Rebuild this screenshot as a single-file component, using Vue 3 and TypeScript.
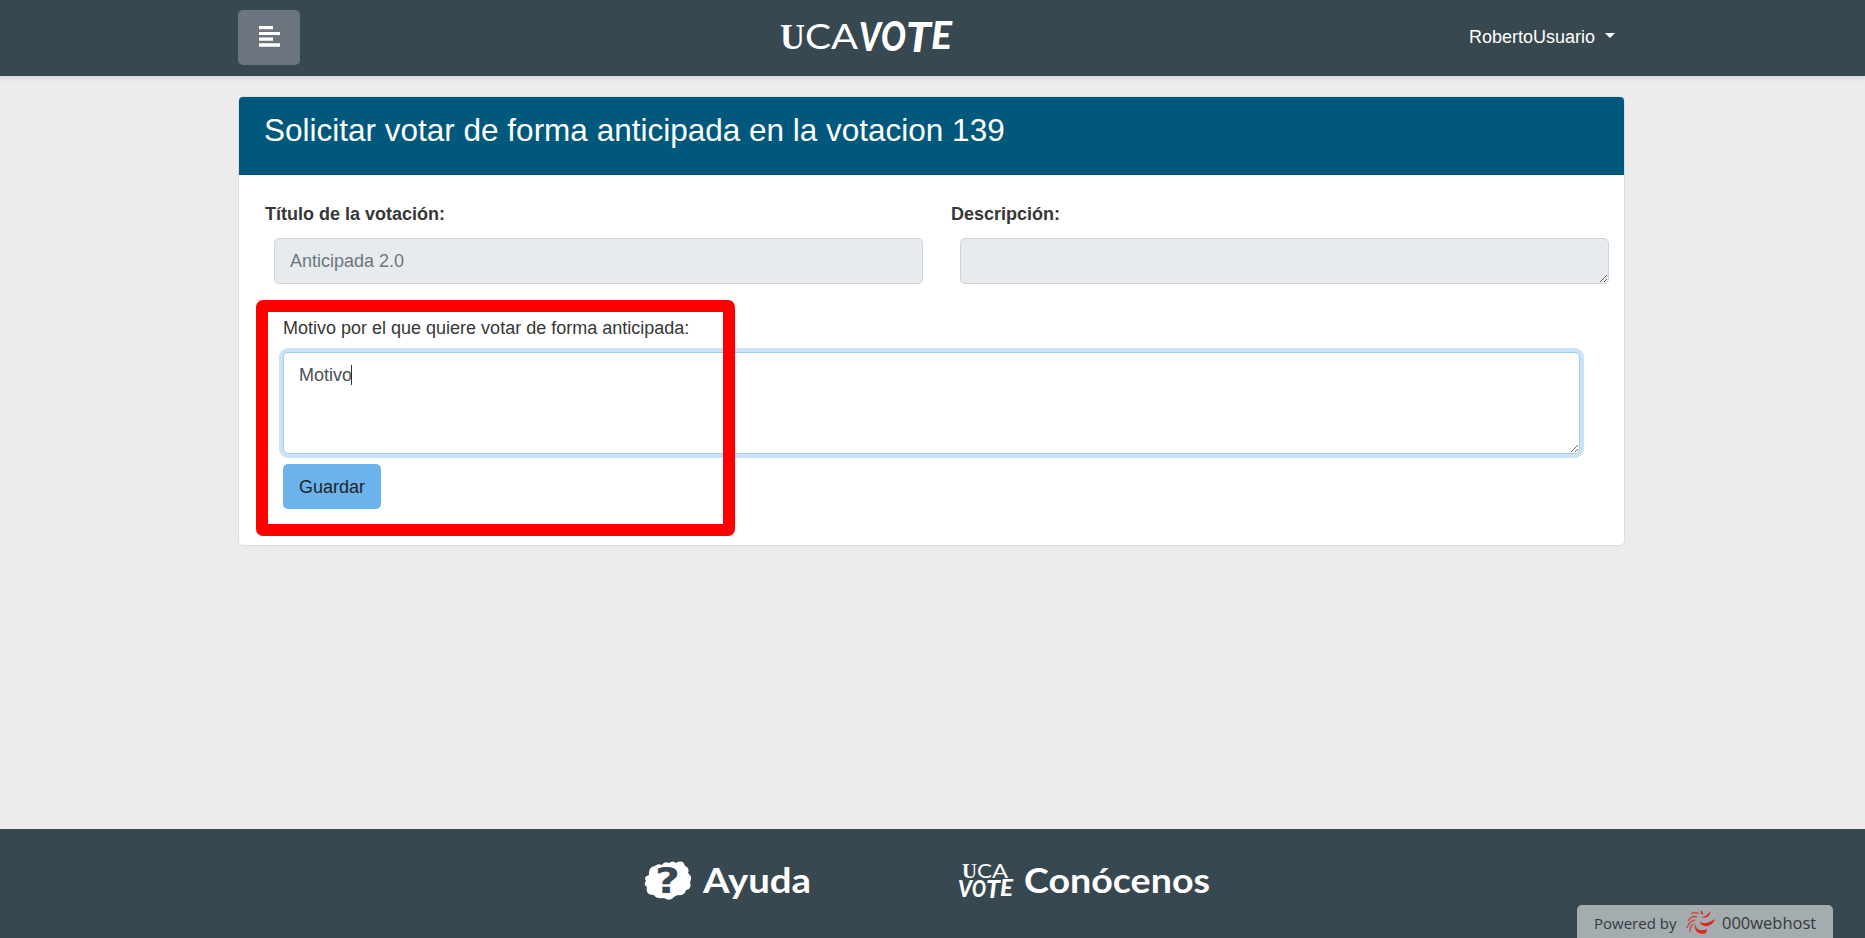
<script setup lang="ts">
import { ref } from 'vue'

interface Letter {
  char: string
  x: number
  y: number
  width: number
  size: number
  kind: string
}

const user = ref('RobertoUsuario')
const votingId = ref(139)
const title = ref('Anticipada 2.0')
const description = ref('')
const reason = ref('Motivo')

const wordmark: Letter[] = [
  { char: 'U', x: 1, y: 31, width: 25, size: 36, kind: 'serif' },
  { char: 'C', x: 26, y: 31, width: 26, size: 34, kind: 'thin' },
  { char: 'A', x: 52, y: 31, width: 27, size: 34, kind: 'thin' },
  { char: 'V', x: 80, y: 33, width: 22, size: 40, kind: 'brush' },
  { char: 'O', x: 102, y: 33, width: 25, size: 41, kind: 'brush' },
  { char: 'T', x: 127, y: 34, width: 25, size: 41, kind: 'brush' },
  { char: 'E', x: 152, y: 31, width: 21, size: 38, kind: 'brush' },
]

const stacked: Letter[] = [
  { char: 'U', x: 4, y: 17, width: 15, size: 21, kind: 'serif' },
  { char: 'C', x: 19, y: 17, width: 15, size: 20, kind: 'thin' },
  { char: 'A', x: 34, y: 17, width: 16, size: 20, kind: 'thin' },
  { char: 'V', x: 0, y: 36, width: 14, size: 23, kind: 'brush' },
  { char: 'O', x: 14, y: 36, width: 14, size: 22, kind: 'brush' },
  { char: 'T', x: 28, y: 37, width: 14, size: 24, kind: 'brush' },
  { char: 'E', x: 42, y: 35, width: 13, size: 22, kind: 'brush' },
]
</script>

<template>
  <div class="page">
    <nav class="navbar">
      <button class="menu" type="button" aria-label="Menu">
        <svg width="22" height="22" viewBox="0 0 22 22">
          <path d="M0 0h14v3.2H0zM0 5.9h21v3.2H0zM0 11.6h14v3.2H0zM0 17.3h21v3.4H0z" />
        </svg>
      </button>
      <svg class="wordmark" width="176" height="40" viewBox="0 0 176 40">
        <text
          v-for="l in wordmark"
          :key="l.char"
          :x="l.x"
          :y="l.y"
          :font-size="l.size"
          :textLength="l.width"
          lengthAdjust="spacingAndGlyphs"
          :class="l.kind"
        >{{ l.char }}</text>
      </svg>
      <div class="user">{{ user }}<span class="chevron"></span></div>
    </nav>

    <main class="card">
      <header class="card-header"><h3>Solicitar votar de forma anticipada en la votacion {{ votingId }}</h3></header>
      <div class="card-body">
        <div class="row">
          <div class="column">
            <label class="strong">Título de la votación:</label>
            <input v-model="title" class="control" disabled />
          </div>
          <div class="column">
            <label class="strong">Descripción:</label>
            <textarea v-model="description" class="control" rows="1" disabled></textarea>
          </div>
        </div>
        <form class="request">
          <label>Motivo por el que quiere votar de forma anticipada:</label>
          <div class="reason">
            <textarea v-model="reason" class="control active"></textarea>
            <span class="caret"></span>
          </div>
          <button class="save" type="button">Guardar</button>
        </form>
      </div>
      <div class="highlight"></div>
    </main>

    <footer class="footer">
      <a class="help">
        <svg width="48" height="40" viewBox="0 0 48 40">
          <path
            class="cloud"
            d="M5 14Q4 6 11 5Q14 2 18 4Q20 0 25 2Q29-1 32 2Q39-2 41 5Q46 7 44 12Q49 16 46 21Q48 28 42 29Q41 35 34 34Q31 35 30 36Q26 41 20 37Q12 38 10 34Q1 34 3 26Q-1 24 2 20Q-1 16 5 14Z"
          />
          <text class="question" x="11" y="32" textLength="25" lengthAdjust="spacingAndGlyphs">?</text>
        </svg>
        <svg class="link" width="110" height="40" viewBox="0 0 110 40">
          <text x="0" y="32" textLength="108" lengthAdjust="spacingAndGlyphs">Ayuda</text>
        </svg>
      </a>
      <a class="about">
        <svg class="stacked" width="57" height="40" viewBox="0 0 57 40">
          <text
            v-for="l in stacked"
            :key="l.char"
            :x="l.x"
            :y="l.y"
            :font-size="l.size"
            :textLength="l.width"
            lengthAdjust="spacingAndGlyphs"
            :class="l.kind"
          >{{ l.char }}</text>
        </svg>
        <svg class="link" width="190" height="40" viewBox="0 0 190 40">
          <text x="0" y="32" textLength="186" lengthAdjust="spacingAndGlyphs">Conócenos</text>
        </svg>
      </a>
    </footer>

    <div class="badge">
      <span class="powered">Powered by</span>
      <svg width="30" height="25" viewBox="0 0 30 25">
        <path d="M9 12C9 20 15 22 21 19L20 23C13 26 7 21 9 12Z" />
        <path d="M14 11C17 15 23 13 29 9C28 14 21 18 16 15Q14 14 14 11Z" />
        <path d="M15 7C19 7 22 5 24 1C25 6 20 9 15 7Z" />
        <path d="M15 0Q18 3 17 5Q14 4 15 0Z" />
        <path class="swirl" d="M13 4Q9 1 5 4M11 7Q6 5 2 11M9 10Q3 11 1 18M7 14Q4 16 4 22" />
      </svg>
      <span class="host">000webhost</span>
    </div>
  </div>
</template>

<style>
body {
  margin: 0;
  background: #ececec;
}
</style>

<style scoped>
* {
  box-sizing: border-box;
}

.page {
  position: relative;
  display: flex;
  flex-direction: column;
  height: 938px;
  overflow: hidden;
  background: #ececec;
  color: #373737;
  font: 18px/28.8px "Liberation Sans", Arial, sans-serif;
}

.navbar {
  display: grid;
  grid-template-columns: 541px 176px 1fr;
  flex: none;
  height: 76px;
  padding: 10px 250px 0 238px;
  background: #384850;
  box-shadow: 0 2px 5px rgba(70, 30, 80, 0.12);
}

.menu {
  display: flex;
  align-items: center;
  justify-content: center;
  width: 62px;
  height: 55px;
  padding: 0 0 2px 1px;
  border: 0;
  border-radius: 5px;
  background: #6c757d;
}

.menu svg {
  fill: #fff;
}

.wordmark {
  margin-top: 8px;
  overflow: visible;
}

svg text {
  fill: #fff;
}

.serif {
  font-family: "Liberation Serif", serif;
  font-weight: 700;
}

.thin {
  font-family: Lato, sans-serif;
  font-weight: 400;
}

.brush {
  font-family: Lato, sans-serif;
  font-style: italic;
  font-weight: 900;
}

.user {
  display: flex;
  justify-content: flex-end;
  padding-top: 13px;
  color: #fff;
}

.chevron {
  width: 0;
  height: 0;
  margin: 10px 0 0 10px;
  border: 5.5px solid transparent;
  border-top-color: #fff;
  border-bottom: 0;
}

.card {
  position: relative;
  flex: none;
  width: 1387px;
  height: 450px;
  margin: 20px 0 0 238px;
  border: 1px solid #dedede;
  border-radius: 5px;
  background: #fff;
}

.card-header {
  height: 78px;
  padding: 15px 25px 0;
  border-bottom: 1px solid #004f6f;
  border-radius: 4px 4px 0 0;
  background: #00587c;
  color: #fff;
}

h3 {
  margin: 0;
  font-size: 31.5px;
  font-weight: 400;
  line-height: 37.8px;
}

.card-body {
  padding: 24.5px 15px 0 26px;
}

.row {
  display: grid;
  grid-template-columns: 658px 658px;
  gap: 28px;
}

label {
  display: block;
}

.strong {
  margin-bottom: 10px;
  font-weight: 700;
}

.control {
  display: block;
  width: 649px;
  height: 46px;
  margin: 0 0 0 9px;
  padding: 7.5px 15px;
  border: 1px solid #ced4da;
  border-radius: 5px;
  outline: 0;
  background: #e7ebee;
  color: #6c757d;
  font: inherit;
}

.request {
  margin: 29.5px 0 0 18px;
}

.request label {
  margin-bottom: 9.5px;
}

.reason {
  position: relative;
}

.control.active {
  width: 1297px;
  height: 102px;
  margin: 0;
  border-color: #a1cbef;
  background: #fff;
  box-shadow: 0 0 0 4px rgba(52, 144, 220, 0.25);
  color: #495057;
}

.caret {
  position: absolute;
  left: 68px;
  top: 13px;
  width: 1px;
  height: 20px;
  background: #333;
}

.save {
  width: 98px;
  height: 45px;
  margin-top: 10px;
  padding: 1px 0 0;
  border: 0;
  border-radius: 5px;
  background: #6cb2eb;
  color: #212529;
  font: inherit;
}

.highlight {
  position: absolute;
  left: 17px;
  top: 203px;
  width: 479px;
  height: 236px;
  border: 12px solid #f00;
  border-radius: 7px;
  pointer-events: none;
}

.footer {
  display: flex;
  height: 109px;
  margin-top: auto;
  padding: 32px 0 0 644px;
  background: #384850;
}

.footer a {
  display: flex;
}

.link,
.stacked {
  overflow: visible;
}

.link text {
  font: 700 34.5px Lato, sans-serif;
}

.help {
  width: 314px;
  gap: 11px;
}

.about {
  gap: 9px;
}

.cloud {
  fill: #fff;
}

svg .question {
  fill: #384850;
  font: 700 35px "DejaVu Sans", sans-serif;
}

.badge {
  position: absolute;
  right: 32px;
  bottom: 0;
  display: flex;
  align-items: center;
  width: 256px;
  height: 33px;
  padding: 2px 0 0 17px;
  border-radius: 5px 5px 0 0;
  background: #a5acb0;
  color: #343a3d;
  font: 15px/30px "Open Sans", sans-serif;
  white-space: nowrap;
}

.badge svg {
  flex: none;
  margin: 0 6px 0 0;
  fill: #d9291c;
}

.badge .swirl {
  fill: none;
  stroke: #c94a42;
  stroke-width: 1.4;
}

.powered {
  width: 92px;
}

.host {
  font-size: 16.5px;
}
</style>
